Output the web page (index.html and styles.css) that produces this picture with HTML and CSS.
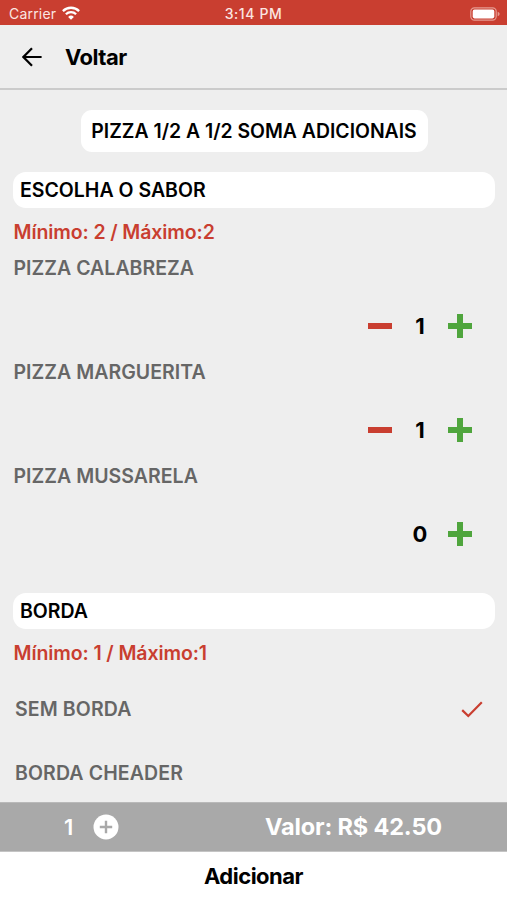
FILE: index.html
```html
<!DOCTYPE html>
<html lang="pt-BR">
<head>
<meta charset="utf-8">
<meta name="viewport" content="width=device-width, initial-scale=1">
<title>Voltar</title>
<link rel="stylesheet" href="styles.css">
</head>
<body>
<div class="app">
  <div class="status">
    <div class="carrier"><span class="carrier-name">Carrier</span>
      <svg class="wifi" viewBox="0 0 18 14" width="18" height="14"><g fill="none" stroke="#fff" stroke-width="2.3"><path d="M.9 5.1a11.5 11.5 0 0 1 16.2 0"/><path d="M3.9 8.3a7.2 7.2 0 0 1 10.2 0"/></g><path d="M9 13.8 6.1 10.9a4.1 4.1 0 0 1 5.8 0z" fill="#fff"/></svg>
    </div>
    <div class="clock">3:14 PM</div>
    <svg class="battery" viewBox="0 0 31 14" width="31" height="14"><rect x=".8" y=".8" width="25.4" height="12.4" rx="3.6" fill="none" stroke="#e59b91" stroke-width="1.2"/><rect x="2.7" y="2.6" width="21.6" height="8.8" rx="1.8" fill="#fff"/><path d="M27.7 4.8c2.6.8 2.6 3.6 0 4.4z" fill="#e59b91"/></svg>
  </div>
  <header class="header">
    <svg class="back" viewBox="0 0 20 20" width="20" height="20"><path d="M19.6 10H1.6M10 1.2 1.4 10l8.6 8.8" fill="none" stroke="#000" stroke-width="2.2"/></svg>
    <span class="back-label">Voltar</span>
  </header>
  <main class="content">
    <h1 class="title">PIZZA 1/2 A 1/2 SOMA ADICIONAIS</h1>
    <section class="group flavors">
      <h2 class="group-name">ESCOLHA O SABOR</h2>
      <p class="limits">Mínimo: 2 / Máximo:2</p>
      <div class="item">
        <p class="item-name">PIZZA CALABREZA</p>
        <div class="stepper"><i class="minus"></i><b class="qty">1</b><i class="plus"></i></div>
      </div>
      <div class="item">
        <p class="item-name">PIZZA MARGUERITA</p>
        <div class="stepper"><i class="minus"></i><b class="qty">1</b><i class="plus"></i></div>
      </div>
      <div class="item">
        <p class="item-name">PIZZA MUSSARELA</p>
        <div class="stepper"><b class="qty">0</b><i class="plus"></i></div>
      </div>
    </section>
    <section class="group">
      <h2 class="group-name">BORDA</h2>
      <p class="limits">Mínimo: 1 / Máximo:1</p>
      <div class="option first"><span>SEM BORDA</span>
        <svg viewBox="0 0 22 17" width="22" height="17"><path d="M1.2 9.1 7.3 15 20.8 1.3" fill="none" stroke="#c93e30" stroke-width="2.2"/></svg>
      </div>
      <div class="option"><span>BORDA CHEADER</span></div>
    </section>
  </main>
  <div class="total">
    <b class="count">1</b>
    <svg class="add" viewBox="0 0 26 26" width="26" height="26"><circle cx="13" cy="13" r="12.5" fill="#fff"/><path d="M13 6.8v12.4M6.8 13h12.4" stroke="#a9a9a9" stroke-width="2.4"/></svg>
    <span class="value">Valor: R$ 42.50</span>
  </div>
  <button class="submit">Adicionar</button>
</div>
</body>
</html>
```
FILE: styles.css
```css
* { box-sizing: border-box; margin: 0; padding: 0; }
body { background: #eee; font-family: Inter, "Liberation Sans", sans-serif; color: #000; }
.app { width: 507px; height: 900px; display: flex; flex-direction: column; overflow: hidden; white-space: nowrap; }

.status { height: 25px; flex: none; background: #c93e30; color: #fbe6e2; display: grid; grid-template-columns: 1fr auto 1fr; align-items: center; padding: 2px 6px 0 9px; font-size: 14px; }
.carrier { display: flex; align-items: center; gap: 6px; }
.carrier-name { letter-spacing: .2px; }
.wifi { margin-top: -2px; }
.clock { font-weight: 500; letter-spacing: .6px; margin-left: -3px; }
.battery { justify-self: end; }

.header { height: 65px; flex: none; display: flex; align-items: center; padding: 1px 0 0 22px; border-bottom: 2px solid #cbcbcb; }
.back-label { margin-left: 23px; font-size: 22px; font-weight: 700; letter-spacing: -.5px; }

.content { flex: 1; min-height: 0; overflow: hidden; padding: 20px 12px 0 13px; font-size: 19.5px; font-weight: 600; }
.title { width: 347px; height: 42px; margin: 0 auto; border-radius: 11px; background: #fff; display: flex; align-items: center; justify-content: center; font-size: 19.4px; font-weight: 600; }
.group { margin-top: 20px; }
.group-name { height: 36px; border-radius: 13px; background: #fff; padding-left: 7px; display: flex; align-items: center; font-size: 19.5px; font-weight: 600; }
.limits { height: 24px; margin-top: 12px; line-height: 24px; color: #c93e30; padding-left: .5px; letter-spacing: -.1px; }
.flavors { height: 401px; }
.flavors .item:first-of-type { margin-top: 12px; }
.item { height: 104px; color: #666; }
.item-name { height: 24px; line-height: 24px; padding-left: .5px; letter-spacing: .03px; }
.stepper { height: 30px; margin-top: 31px; padding-right: 23px; display: flex; align-items: center; justify-content: flex-end; color: #000; }
.minus { width: 24px; height: 6px; background: #c93e30; }
.qty { width: 56px; text-align: center; font-size: 22px; font-weight: 700; }
.plus { width: 24px; height: 24px; background: linear-gradient(#4fa53d, #4fa53d) center / 24px 6px no-repeat, linear-gradient(#4fa53d, #4fa53d) center / 6px 24px no-repeat; }
.option { height: 63.5px; padding: 0 12px 0 2px; display: flex; align-items: center; justify-content: space-between; color: #666; letter-spacing: .12px; }
.option.first { margin-top: 12.5px; }

.total { height: 50px; flex: none; background: #a9a9a9; border-top: 1px solid #b9b9b9; border-bottom: 1px solid #c4c4c4; color: #fff; display: flex; align-items: center; padding: 0 0 1px 64px; font-size: 23.5px; font-weight: 700; }
.count { width: 12px; font-size: 22px; font-weight: 600; }
.add { margin-left: 17px; }
.value { margin-left: 146px; letter-spacing: -.15px; }
.submit { height: 48px; flex: none; border: 0; background: #fff; color: #000; font: 700 22px Inter, "Liberation Sans", sans-serif; letter-spacing: -.5px; }
```
